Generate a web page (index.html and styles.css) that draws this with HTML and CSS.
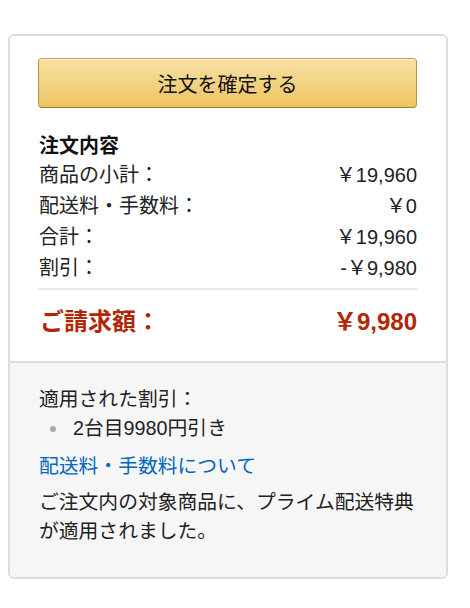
FILE: index.html
```html
<!DOCTYPE html>
<html lang="ja">
<head>
<meta charset="utf-8">
<link rel="stylesheet" href="styles.css">
</head>
<body>
<div class="card">
  <div class="top">
    <button class="place-order">注文を確定する</button>
    <h3 class="heading">注文内容</h3>
    <div class="row"><span>商品の小計：</span><span class="num">￥19,960</span></div>
    <div class="row"><span>配送料・手数料：</span><span class="num">￥0</span></div>
    <div class="row"><span>合計：</span><span class="num">￥19,960</span></div>
    <div class="row"><span>割引：</span><span class="num">-￥9,980</span></div>
    <div class="total"><span>ご請求額：</span><span class="num">￥9,980</span></div>
  </div>
  <div class="bottom">
    <div class="line">適用された割引：</div>
    <ul class="promos"><li>2台目9980円引き</li></ul>
    <a class="link" href="#">配送料・手数料について</a>
    <p class="note">ご注文内の対象商品に、プライム配送特典が適用されました。</p>
  </div>
</div>
</body>
</html>
```

FILE: styles.css
```css
html, body {
  margin: 0;
  padding: 0;
  background: #fff;
}
body {
  padding: 34px 0 0 8px;
  font-family: "Liberation Sans", "Noto Sans CJK JP", sans-serif;
  color: #111;
}
.card {
  width: 436px;
  border: 2px solid #ddd;
  border-radius: 6px;
  overflow: hidden;
}
.top {
  padding: 22px 29px 23px 28px;
  background: #fff;
}
.place-order {
  display: block;
  width: 100%;
  height: 50px;
  margin: 0;
  padding: 0;
  border: 1px solid;
  border-color: #c5a44f #b89540 #9c7e31;
  border-radius: 4px;
  background: linear-gradient(to bottom, #f7e0a6, #eec461);
  font-family: "Noto Sans CJK JP", sans-serif;
  font-size: 20px;
  color: #111;
  box-shadow: inset 0 1px 0 rgba(255,255,255,0.5);
}
.heading {
  margin: 21px 0 0 1px;
  font-size: 20px;
  font-weight: 700;
  line-height: 31px;
  font-family: "Noto Sans CJK JP", sans-serif;
}
.row {
  display: flex;
  justify-content: space-between;
  font-size: 20px;
  line-height: 31px;
  padding-left: 1px;
  color: #222;
}
.num {
  font-family: "Liberation Sans", "Noto Sans CJK JP", sans-serif;
}
.total {
  display: flex;
  justify-content: space-between;
  margin-top: 4px;
  border-top: 2px solid #e7e7e7;
  padding-top: 16px;
  padding-left: 2px;
  font-size: 24px;
  line-height: 32px;
  font-weight: 700;
  color: #b12704;
}
.bottom {
  border-top: 2px solid #ddd;
  background: #f6f6f6;
  padding: 22px 29px 31px 29px;
  font-size: 19.8px;
  line-height: 29px;
  color: #222;
}
.line {
  margin: 0;
}
.promos {
  list-style: none;
  margin: 0;
  padding: 0 0 0 34px;
}
.promos li {
  position: relative;
}
.promos li::before {
  content: "";
  position: absolute;
  left: -23px;
  top: 12px;
  width: 6px;
  height: 6px;
  border-radius: 50%;
  background: #aaa;
}
.link {
  display: block;
  margin-top: 9px;
  color: #0066c0;
  text-decoration: none;
}
.note {
  margin: 7px 0 0 0;
}
```
